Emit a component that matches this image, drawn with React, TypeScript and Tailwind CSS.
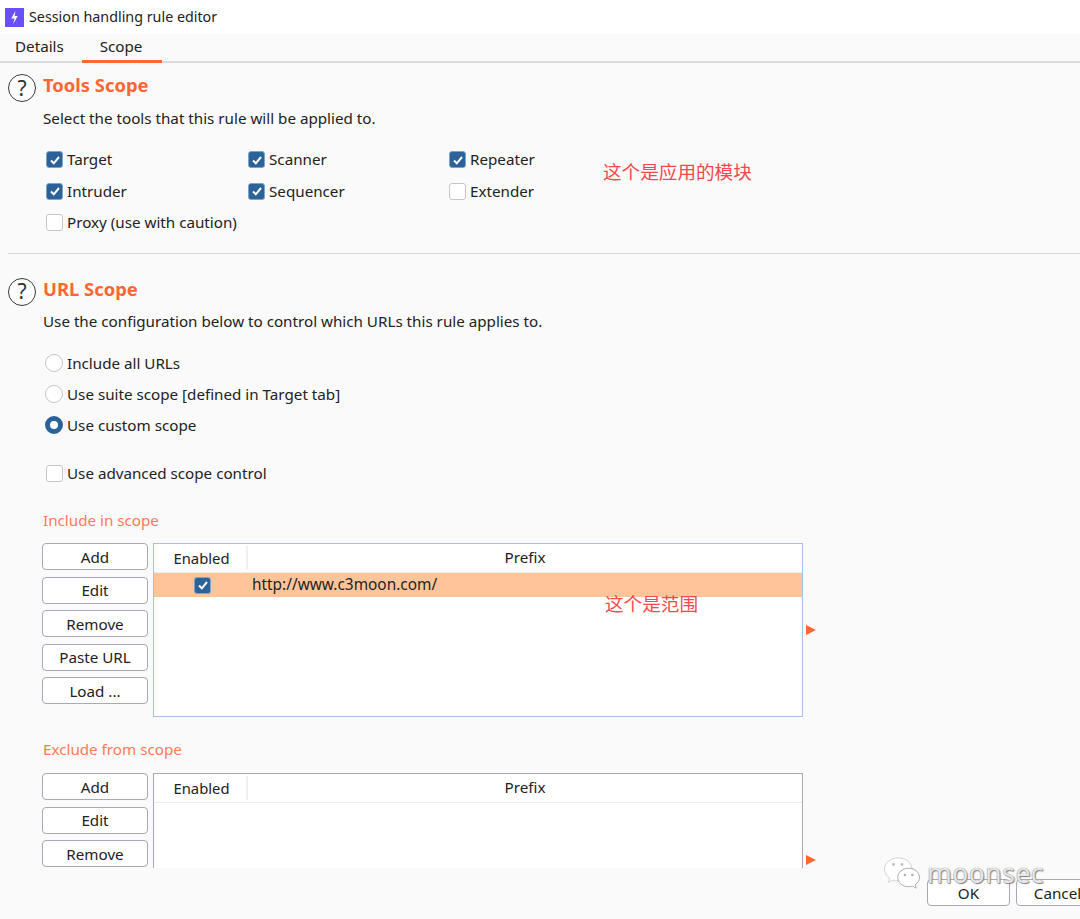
import React from 'react';

const font = { fontFamily: '"Noto Sans", "Noto Sans CJK SC", sans-serif' };

function CheckBox({ checked }: { checked?: boolean }) {
  if (!checked) {
    return <span className="block w-[17px] h-[17px] shrink-0 rounded-[3px] border border-[#c6c6c6] bg-white" />;
  }
  return (
    <span className="flex w-[17px] h-[17px] shrink-0 items-center justify-center rounded-[3px] bg-[#2a6299] border border-[#7fa3c6]">
      <svg viewBox="0 0 12 12" className="w-[12px] h-[12px]" fill="none" stroke="#fff" strokeWidth="2">
        <path d="M2 6.500l2.800 2.800L10 3" />
      </svg>
    </span>
  );
}

function Check({ label, checked }: { label: string; checked?: boolean }) {
  return (
    <div className="flex items-center gap-[4px] h-[31.5px] pl-[3px]">
      <CheckBox checked={checked} />
      <span>{label}</span>
    </div>
  );
}

function Radio({ label, checked }: { label: string; checked?: boolean }) {
  return (
    <div className="flex items-center gap-[4px] h-[31px] pl-[2px]">
      {checked ? (
        <span className="block w-[18px] h-[18px] rounded-full border-[5px] border-[#2a6299] bg-white" />
      ) : (
        <span className="block w-[18px] h-[18px] rounded-full border border-[#c6c6c6] bg-white" />
      )}
      <span>{label}</span>
    </div>
  );
}

function Help() {
  return (
    <span className="flex w-[28px] h-[28px] shrink-0 items-center justify-center rounded-full border-[1.5px] border-[#3a3a3a] text-[21px] leading-none text-[#333] bg-[#fdfdfd]">
      ?
    </span>
  );
}

function SideButton({ label }: { label: string }) {
  return (
    <button className="block w-[106px] h-[27px] rounded-[4px] border-[1.5px] border-[#a9a9b6] bg-white text-center leading-[24px] text-[#222]">
      {label}
    </button>
  );
}

function TableHeader() {
  return (
    <div className="flex h-[29px] border-b border-[#ededed] text-[#222]">
      <div className="w-[94px] my-[2px] pl-[3px] border-r-2 border-[#efefef] text-center leading-[25px] text-[14.800px]">Enabled</div>
      <div className="flex-1 text-center leading-[27px]">Prefix</div>
    </div>
  );
}

function Triangle({ className }: { className: string }) {
  return (
    <svg viewBox="0 0 10 10" className={`w-[10px] h-[10px] ${className}`}>
      <path d="M0 0L10 5L0 10Z" fill="#ff6633" />
    </svg>
  );
}

export default function App() {
  return (
    <div style={font} className="relative w-[1080px] h-[919px] overflow-hidden bg-[#fafafa] text-[15.2px] text-[#222]">
      {/* Title bar */}
      <div className="flex items-center h-[34px] bg-white pl-[5px] gap-[5px] text-[14.3px] text-[#222]">
        <span className="flex w-[19px] h-[19px] items-center justify-center bg-[#6a4ff5]">
          <svg viewBox="0 0 16 16" className="w-[15px] h-[15px]" fill="#fff">
            <path d="M9 1L4.500 9H8L6.500 15L11.500 6.500H8.200Z" />
          </svg>
        </span>
        <span>Session handling rule editor</span>
      </div>

      {/* Tabs */}
      <div className="flex h-[29px] border-b-2 border-[#d8dcdc] pl-[15px]">
        <div className="w-[67px] leading-[24px]">Details</div>
        <div className="w-[80px] h-[29px] pr-[2px] border-b-[3px] border-[#ff6633] text-center leading-[24px]">Scope</div>
      </div>

      {/* Tools scope */}
      <div className="pl-[8px] pt-[11px]">
        <div className="flex items-start gap-[7px]">
          <Help />
          <h2 className="text-[18.4px] font-bold leading-[22px] text-[#ff6633]">Tools Scope</h2>
        </div>
        <p className="pl-[35px] mt-[2px] leading-[28px]">Select the tools that this rule will be applied to.</p>
        <div className="ml-[35px] mt-[12px] grid grid-cols-[202px_201px_100px] w-[520px]">
          <Check label="Target" checked />
          <Check label="Scanner" checked />
          <Check label="Repeater" checked />
          <Check label="Intruder" checked />
          <Check label="Sequencer" checked />
          <Check label="Extender" />
          <Check label="Proxy (use with caution)" />
        </div>
      </div>

      <div className="ml-[8px] mt-[14px] border-t border-[#d9d9d9]" />

      {/* URL scope */}
      <div className="pl-[8px] pt-[24px]">
        <div className="flex items-start gap-[7px]">
          <Help />
          <h2 className="text-[18.4px] font-bold leading-[22px] text-[#ff6633]">URL Scope</h2>
        </div>
        <p className="pl-[35px] mt-[1px] leading-[28px]">Use the configuration below to control which URLs this rule applies to.</p>
        <div className="ml-[35px] mt-[13px]">
          <Radio label="Include all URLs" />
          <Radio label="Use suite scope [defined in Target tab]" />
          <Radio label="Use custom scope" checked />
        </div>
        <div className="ml-[35px] mt-[17px]">
          <Check label="Use advanced scope control" />
        </div>

        {/* Include in scope */}
        <p className="pl-[35px] mt-[19px] leading-[24px] text-[#ff7a55]">Include in scope</p>
        <div className="flex ml-[34px] mt-[11px] gap-[5px]">
          <div className="flex flex-col gap-[6.5px]">
            <SideButton label="Add" />
            <SideButton label="Edit" />
            <SideButton label="Remove" />
            <SideButton label="Paste URL" />
            <SideButton label="Load ..." />
          </div>
          <div className="relative w-[650px] h-[174px] border border-[#a5c0e2] bg-white">
            <TableHeader />
            <div className="flex items-center h-[24px] bg-[#ffc499]">
              <div className="flex w-[97px] justify-center">
                <CheckBox checked />
              </div>
              <span className="pl-[1px] text-[15.4px]">http://www.c3moon.com/</span>
            </div>
            <Triangle className="absolute left-[652px] top-[81px]" />
          </div>
        </div>

        {/* Exclude from scope */}
        <p className="pl-[35px] mt-[20px] leading-[24px] text-[#ff7a55]">Exclude from scope</p>
        <div className="flex ml-[34px] mt-[12px] gap-[5px]">
          <div className="flex flex-col gap-[6.5px]">
            <SideButton label="Add" />
            <SideButton label="Edit" />
            <SideButton label="Remove" />
          </div>
          <div className="relative w-[650px] h-[95px] border-x border-t border-[#a9a9b6] bg-white">
            <TableHeader />
            <Triangle className="absolute left-[652px] top-[81px]" />
          </div>
        </div>
      </div>

      {/* Footer buttons */}
      <div className="flex mt-[11px] ml-[927px] gap-[6px]">
        <button className="w-[83px] h-[27px] shrink-0 rounded-[4px] border-[1.5px] border-[#a9a9b6] bg-white leading-[24px]">OK</button>
        <button className="w-[83px] h-[27px] shrink-0 rounded-[4px] border-[1.5px] border-[#a9a9b6] bg-white leading-[24px]">Cancel</button>
      </div>

      {/* Annotations */}
      <span className="absolute left-[603px] top-[160px] text-[18.6px] leading-[24px] text-[#f5484d]">这个是应用的模块</span>
      <span className="absolute left-[605px] top-[592px] text-[18.6px] leading-[24px] text-[#f5484d]">这个是范围</span>

      {/* Watermark */}
      <div className="absolute left-[883px] top-[856px] flex items-center gap-[6px]">
        <svg viewBox="0 0 40 36" className="w-[38px] h-[34px]">
          <path d="M16 2C8 2 1.500 7 1.500 14c0 4 2 7 5.500 9.500L5.500 28l5-2.500c1.800.5 3.500.8 5.500.8 8 0 14.500-5.300 14.500-12.300S24 2 16 2Z" fill="#fff" stroke="#cfcfcf" />
          <path d="M27 13c-6.500 0-11.500 4.300-11.500 9.700S20.500 32.500 27 32.500c1.500 0 2.800-.2 4-.6l4 2.100-1-3.600c2.800-1.900 4.500-4.600 4.500-7.700C38.500 17.300 33.500 13 27 13Z" fill="#fff" stroke="#a8a8a8" />
          <circle cx="11" cy="9" r="1.500" fill="#c0c0c0" />
          <circle cx="20" cy="9" r="1.500" fill="#c0c0c0" />
          <circle cx="23" cy="20" r="1.300" fill="#aaa" />
          <circle cx="31" cy="20" r="1.300" fill="#aaa" />
        </svg>
        <span className="text-[26.5px] leading-[32px] tracking-[0.5px] text-white/85 [text-shadow:0_0_1px_#555,1px_1px_1px_#888]">moonsec</span>
      </div>
    </div>
  );
}
